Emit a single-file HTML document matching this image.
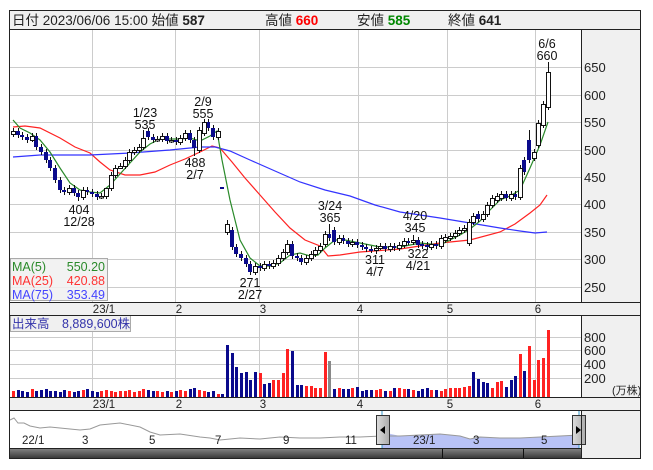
<!DOCTYPE html>
<html><head><meta charset="utf-8">
<style>
html,body{margin:0;padding:0;background:#fff;width:653px;height:470px;overflow:hidden}
svg{display:block;font-family:"Liberation Sans","Noto Sans CJK JP",sans-serif}
.w{fill:#fff;stroke:#111;stroke-width:1}
.d{fill:#0a0a8c}
.r{fill:#f22}
.b{fill:#0a0a8c}
</style></head><body>
<svg width="653" height="470" viewBox="0 0 653 470" xmlns="http://www.w3.org/2000/svg">
<rect x="0" y="0" width="653" height="470" fill="#fff"/>
<rect x="10" y="10" width="631" height="19" fill="#f0f0f0"/>
<text x="12" y="25" font-size="13.5" fill="#222">日付 2023/06/06 15:00 始値 <tspan font-weight="bold">587</tspan></text>
<text x="265" y="25" font-size="13.5" fill="#222">高値 <tspan font-weight="bold" fill="#f00">660</tspan></text>
<text x="357" y="25" font-size="13.5" fill="#222">安値 <tspan font-weight="bold" fill="#080">585</tspan></text>
<text x="448" y="25" font-size="13.5" fill="#222">終値 <tspan font-weight="bold">641</tspan></text>
<rect x="581" y="29" width="60" height="381" fill="#f0f0f0"/>
<rect x="581" y="410" width="60" height="49" fill="#eee"/>
<rect x="10" y="302" width="631" height="13" fill="#f0f0f0"/>
<rect x="10" y="397" width="631" height="13" fill="#f0f0f0"/>
<g stroke="#ccc" stroke-width="1">
<path d="M10 67.5H581M10 95.5H581M10 122.5H581M10 150.5H581M10 177.5H581M10 204.5H581M10 232.5H581M10 259.5H581M10 287.5H581M10 337.5H581M10 350.5H581M10 364.5H581M10 378.5H581"/>
<path d="M92.5 29V302M175.5 29V302M259.5 29V302M358.5 29V302M447.5 29V302M535.5 29V302M92.5 315V397M175.5 315V397M259.5 315V397M358.5 315V397M447.5 315V397M535.5 315V397"/>
</g>
<!-- MA lines -->
<g fill="none" stroke-width="1.2">
<polyline stroke="#f22" points="13,127 25,126 40,128 60,138 75,147 90,153 100,162 110,170 125,175 140,175 155,172 170,165 185,159 200,152 212,146 220,148 232,162 245,178 260,195 275,212 290,228 305,240 320,246 328,256 340,255 360,252 400,249 440,243 470,240 500,232 515,224 530,213 540,205 547,195"/>
<polyline stroke="#33f" points="13,157 40,155 90,155 130,153 170,150 200,147 215,147 230,151 250,160 275,171 300,182 325,190 350,196 375,205 400,212 440,218 470,223 500,228 520,231 535,233 547,232"/>
<polyline stroke="#2a8a2a" points="13,120 20,128 30,133 40,140 50,152 60,168 70,183 80,190 90,192 100,193 110,185 120,174 130,163 140,152 150,144 160,139 170,139 180,139 190,138 200,141 210,136 217,131 222,160 230,200 240,240 250,258 260,266 270,266 280,263 290,255 300,253 310,256 318,255 325,248 335,240 345,240 360,243 380,247 400,247 420,243 440,245 450,240 460,235 470,229 480,221 490,210 500,200 510,196 520,190 530,168 540,145 548,122"/>
</g>
<!-- wicks -->
<path fill="none" stroke="#111" stroke-width="1" d="M13.5 128V137M18.5 128V138M22.5 132V140M27.5 134V143M32.5 133V142M36.5 133V150M41.5 144V155M46.5 149V163M50.5 157V171M55.5 165V183M60.5 177V193M64.5 187V195M69.5 185V195M74.5 185V196M78.5 190V201M83.5 187V200M87.5 187V195M92.5 189V197M97.5 191V200M101.5 193V199M106.5 193V199M111.5 172V191M115.5 165V178M120.5 163V169M125.5 157V169M129.5 149V163M134.5 147V155M139.5 144V153M143.5 130V150M148.5 128V140M153.5 134V143M157.5 136V142M162.5 133V142M167.5 133V144M171.5 137V143M176.5 137V145M180.5 135V145M185.5 130V141M190.5 130V143M194.5 137V156M199.5 127V153M204.5 119V136M208.5 119V131M213.5 125V140M218.5 128V140M222.5 187V189M227.5 220V235M232.5 227V250M236.5 244V257M241.5 251V261M246.5 255V267M250.5 261V275M255.5 263V275M260.5 263V271M264.5 261V271M269.5 261V269M273.5 260V269M278.5 255V266M283.5 249V261M287.5 240V255M292.5 241V259M297.5 253V261M301.5 255V265M306.5 255V265M311.5 251V261M315.5 247V257M320.5 243V253M325.5 231V247M329.5 224V241M334.5 227V245M339.5 235V245M343.5 235V244M348.5 238V247M352.5 239V247M357.5 239V248M362.5 242V250M366.5 244V252M371.5 246V253M376.5 245V254M380.5 243V250M385.5 243V252M390.5 243V252M394.5 243V251M399.5 242V251M404.5 238V248M408.5 238V245M413.5 235V245M418.5 237V248M422.5 241V249M427.5 242V250M431.5 241V250M436.5 241V249M441.5 235V249M445.5 234V243M450.5 233V241M455.5 230V239M459.5 227V236M464.5 225V233M469.5 219V246M473.5 213V225M478.5 211V222M483.5 211V222M487.5 202V217M492.5 195V208M497.5 193V203M501.5 191V201M506.5 191V201M511.5 191V201M515.5 191V200M520.5 165V200M524.5 157V175M529.5 130V163M534.5 149V161M538.5 120V148M543.5 101V128M548.5 62V110"/>
<!-- down bodies -->
<g class="d">
<rect x="16" y="131" width="4" height="4"/><rect x="20" y="135" width="4" height="2"/><rect x="25" y="137" width="4" height="3"/><rect x="34" y="136" width="4" height="11"/><rect x="39" y="147" width="4" height="5"/><rect x="44" y="152" width="4" height="8"/><rect x="48" y="160" width="4" height="8"/><rect x="53" y="168" width="4" height="12"/><rect x="58" y="180" width="4" height="10"/><rect x="62" y="190" width="4" height="2"/><rect x="72" y="188" width="4" height="5"/><rect x="76" y="193" width="4" height="4"/><rect x="85" y="190" width="4" height="2"/><rect x="90" y="192" width="4" height="2"/><rect x="95" y="194" width="4" height="3"/>
<rect x="146" y="131" width="4" height="6"/><rect x="151" y="137" width="4" height="3"/><rect x="165" y="136" width="4" height="5"/><rect x="174" y="140" width="4" height="2"/><rect x="188" y="133" width="4" height="7"/><rect x="192" y="140" width="4" height="8"/><rect x="206" y="122" width="4" height="6"/><rect x="211" y="128" width="4" height="9"/><rect x="220" y="187" width="4" height="2"/>
<rect x="230" y="230" width="4" height="17"/><rect x="234" y="247" width="4" height="7"/><rect x="239" y="254" width="4" height="4"/><rect x="244" y="258" width="4" height="6"/><rect x="248" y="264" width="4" height="8"/><rect x="258" y="266" width="4" height="2"/><rect x="267" y="264" width="4" height="2"/><rect x="290" y="244" width="4" height="12"/><rect x="295" y="256" width="4" height="2"/><rect x="299" y="258" width="4" height="4"/>
<rect x="327" y="234" width="4" height="4"/><rect x="332" y="230" width="4" height="12"/><rect x="341" y="238" width="4" height="3"/><rect x="346" y="241" width="4" height="3"/><rect x="355" y="242" width="4" height="3"/><rect x="360" y="245" width="4" height="2"/><rect x="364" y="247" width="4" height="2"/><rect x="369" y="249" width="4" height="2"/><rect x="383" y="246" width="4" height="3"/><rect x="392" y="246" width="4" height="2"/><rect x="406" y="241" width="4" height="2"/><rect x="416" y="240" width="4" height="5"/><rect x="420" y="244" width="4" height="2"/><rect x="425" y="245" width="4" height="2"/><rect x="434" y="244" width="4" height="2"/>
<rect x="476" y="214" width="4" height="5"/><rect x="504" y="194" width="4" height="4"/><rect x="513" y="194" width="4" height="3"/><rect x="522" y="160" width="4" height="12"/><rect x="527" y="140" width="4" height="20"/>
</g>
<!-- up bodies -->
<g class="w">
<rect x="11.5" y="131.5" width="4" height="3"/><rect x="30.5" y="136.5" width="4" height="4"/><rect x="67.5" y="188.5" width="4" height="4"/><rect x="81.5" y="190.5" width="4" height="7"/><rect x="99.5" y="196.5" width="4" height="1.5"/><rect x="104.5" y="188.5" width="4" height="8"/><rect x="109.5" y="175.5" width="4" height="13"/><rect x="113.5" y="168.5" width="4" height="7"/><rect x="118.5" y="166.5" width="4" height="2"/><rect x="123.5" y="160.5" width="4" height="6"/><rect x="127.5" y="152.5" width="4" height="8"/><rect x="132.5" y="150.5" width="4" height="2"/><rect x="137.5" y="147.5" width="4" height="3"/><rect x="141.5" y="138.5" width="4" height="9"/>
<rect x="155.5" y="139.5" width="4" height="1.5"/><rect x="160.5" y="136.5" width="4" height="3"/><rect x="169.5" y="140.5" width="4" height="1.5"/><rect x="178.5" y="138.5" width="4" height="4"/><rect x="183.5" y="133.5" width="4" height="5"/><rect x="197.5" y="130.5" width="4" height="20"/><rect x="202.5" y="122.5" width="4" height="11"/><rect x="216.5" y="131.5" width="4" height="6"/>
<rect x="225.5" y="224.5" width="4" height="8"/><rect x="253.5" y="266.5" width="4" height="6"/><rect x="262.5" y="264.5" width="4" height="4"/><rect x="271.5" y="263.5" width="4" height="3"/><rect x="276.5" y="258.5" width="4" height="5"/><rect x="281.5" y="252.5" width="4" height="6"/><rect x="285.5" y="244.5" width="4" height="8"/><rect x="304.5" y="258.5" width="4" height="4"/><rect x="309.5" y="254.5" width="4" height="4"/><rect x="313.5" y="250.5" width="4" height="4"/><rect x="318.5" y="246.5" width="4" height="4"/><rect x="323.5" y="234.5" width="4" height="10"/>
<rect x="337.5" y="238.5" width="4" height="4"/><rect x="350.5" y="242.5" width="4" height="2"/><rect x="374.5" y="248.5" width="4" height="2"/><rect x="378.5" y="246.5" width="4" height="2"/><rect x="388.5" y="246.5" width="4" height="3"/><rect x="397.5" y="245.5" width="4" height="3"/><rect x="402.5" y="241.5" width="4" height="4"/><rect x="411.5" y="240.5" width="4" height="2"/><rect x="429.5" y="244.5" width="4" height="3"/><rect x="439.5" y="238.5" width="4" height="8"/><rect x="443.5" y="237.5" width="4" height="3"/><rect x="448.5" y="236.5" width="4" height="2"/><rect x="453.5" y="233.5" width="4" height="3"/><rect x="457.5" y="230.5" width="4" height="3"/><rect x="462.5" y="228.5" width="4" height="2"/><rect x="467.5" y="222.5" width="4" height="21"/><rect x="471.5" y="216.5" width="4" height="6"/>
<rect x="481.5" y="214.5" width="4" height="5"/><rect x="485.5" y="205.5" width="4" height="9"/><rect x="490.5" y="198.5" width="4" height="7"/><rect x="495.5" y="196.5" width="4" height="4"/><rect x="499.5" y="194.5" width="4" height="4"/><rect x="509.5" y="194.5" width="4" height="4"/><rect x="518.5" y="168.5" width="4" height="29"/><rect x="532.5" y="152.5" width="4" height="6"/><rect x="536.5" y="123.5" width="4" height="22"/><rect x="541.5" y="104.5" width="4" height="21"/><rect x="546.5" y="72.5" width="4" height="35"/>
</g>
<!-- volume -->
<g>
<rect class="r" x="12" y="391" width="3" height="6"/><rect class="b" x="17" y="390" width="3" height="7"/><rect class="b" x="21" y="391" width="3" height="6"/><rect class="b" x="26" y="392" width="3" height="5"/><rect class="r" x="31" y="389" width="3" height="8"/><rect class="b" x="35" y="391" width="3" height="6"/><rect class="b" x="40" y="390" width="3" height="7"/><rect class="b" x="45" y="389" width="3" height="8"/><rect class="b" x="49" y="391" width="3" height="6"/><rect class="b" x="54" y="391" width="3" height="6"/><rect class="b" x="59" y="392" width="3" height="5"/><rect class="b" x="63" y="390" width="3" height="7"/><rect class="r" x="68" y="391" width="3" height="6"/><rect class="b" x="73" y="392" width="3" height="5"/><rect class="b" x="77" y="391" width="3" height="6"/><rect class="r" x="82" y="390" width="3" height="7"/><rect class="b" x="86" y="389" width="3" height="8"/><rect class="b" x="91" y="391" width="3" height="6"/><rect class="b" x="96" y="392" width="3" height="5"/><rect class="r" x="100" y="391" width="3" height="6"/><rect class="r" x="105" y="390" width="3" height="7"/><rect class="r" x="110" y="391" width="3" height="6"/><rect class="r" x="114" y="392" width="3" height="5"/><rect class="r" x="119" y="391" width="3" height="6"/><rect class="r" x="124" y="391" width="3" height="6"/><rect class="r" x="128" y="390" width="3" height="7"/><rect class="r" x="133" y="392" width="3" height="5"/><rect class="r" x="138" y="391" width="3" height="6"/><rect class="r" x="142" y="389" width="3" height="8"/><rect class="b" x="147" y="390" width="3" height="7"/><rect class="b" x="152" y="391" width="3" height="6"/><rect class="r" x="156" y="391" width="3" height="6"/><rect class="r" x="161" y="392" width="3" height="5"/><rect class="b" x="166" y="391" width="3" height="6"/><rect class="r" x="170" y="392" width="3" height="5"/><rect class="b" x="175" y="391" width="3" height="6"/><rect class="r" x="179" y="390" width="3" height="7"/><rect class="r" x="184" y="391" width="3" height="6"/><rect class="b" x="189" y="389" width="3" height="8"/><rect class="b" x="193" y="388" width="3" height="9"/><rect class="r" x="198" y="390" width="3" height="7"/><rect class="r" x="203" y="391" width="3" height="6"/><rect class="b" x="207" y="392" width="3" height="5"/><rect class="b" x="212" y="391" width="3" height="6"/><rect class="r" x="217" y="394" width="3" height="3"/><rect class="b" x="221" y="394" width="3" height="3"/>
<rect class="b" x="226" y="345" width="3" height="52"/><rect class="b" x="231" y="353" width="3" height="44"/><rect class="b" x="235" y="367" width="3" height="30"/><rect class="b" x="240" y="373" width="3" height="24"/><rect class="b" x="245" y="372" width="3" height="25"/><rect class="b" x="249" y="380" width="3" height="17"/><rect class="b" x="254" y="372" width="3" height="25"/><rect class="r" x="259" y="373" width="3" height="24"/><rect class="b" x="263" y="384" width="3" height="13"/><rect class="b" x="268" y="383" width="3" height="14"/><rect class="r" x="272" y="380" width="3" height="17"/><rect class="r" x="277" y="380" width="3" height="17"/><rect class="r" x="282" y="373" width="3" height="24"/><rect class="r" x="286" y="349" width="3" height="48"/><rect class="b" x="291" y="351" width="3" height="46"/><rect class="b" x="296" y="385" width="3" height="12"/><rect class="b" x="300" y="385" width="3" height="12"/><rect class="r" x="305" y="386" width="3" height="11"/><rect class="r" x="310" y="386" width="3" height="11"/><rect class="r" x="314" y="388" width="3" height="9"/><rect class="r" x="319" y="388" width="3" height="9"/><rect class="r" x="324" y="352" width="3" height="45"/><rect x="328" y="361" width="3" height="36" fill="#888"/>
<rect class="b" x="333" y="389" width="3" height="8"/><rect class="r" x="338" y="388" width="3" height="9"/><rect class="b" x="342" y="389" width="3" height="8"/><rect class="b" x="347" y="389" width="3" height="8"/><rect class="r" x="351" y="388" width="3" height="9"/><rect class="b" x="356" y="387" width="3" height="10"/><rect class="b" x="361" y="391" width="3" height="6"/><rect class="b" x="365" y="390" width="3" height="7"/><rect class="b" x="370" y="390" width="3" height="7"/><rect class="r" x="375" y="390" width="3" height="7"/><rect class="r" x="379" y="389" width="3" height="8"/><rect class="b" x="384" y="391" width="3" height="6"/><rect class="r" x="389" y="391" width="3" height="6"/><rect class="b" x="393" y="388" width="3" height="9"/><rect class="r" x="398" y="388" width="3" height="9"/><rect class="r" x="403" y="389" width="3" height="8"/><rect class="b" x="407" y="389" width="3" height="8"/><rect class="r" x="412" y="390" width="3" height="7"/><rect class="b" x="417" y="391" width="3" height="6"/><rect class="b" x="421" y="389" width="3" height="8"/><rect class="b" x="426" y="388" width="3" height="9"/><rect class="r" x="430" y="390" width="3" height="7"/><rect class="b" x="435" y="390" width="3" height="7"/><rect class="r" x="440" y="391" width="3" height="6"/><rect class="r" x="444" y="389" width="3" height="8"/><rect class="r" x="449" y="388" width="3" height="9"/><rect class="r" x="454" y="388" width="3" height="9"/><rect class="r" x="458" y="388" width="3" height="9"/><rect class="r" x="463" y="387" width="3" height="10"/><rect class="r" x="468" y="386" width="3" height="11"/><rect class="b" x="472" y="372" width="3" height="25"/><rect class="b" x="477" y="379" width="3" height="18"/><rect class="b" x="482" y="382" width="3" height="15"/><rect class="b" x="486" y="383" width="3" height="14"/><rect class="r" x="491" y="388" width="3" height="9"/><rect class="r" x="496" y="382" width="3" height="15"/><rect class="r" x="500" y="381" width="3" height="16"/><rect class="b" x="505" y="387" width="3" height="10"/><rect class="b" x="510" y="380" width="3" height="17"/><rect class="b" x="514" y="376" width="3" height="21"/><rect class="r" x="519" y="354" width="3" height="43"/><rect class="b" x="523" y="371" width="3" height="26"/><rect class="r" x="528" y="346" width="3" height="51"/><rect class="r" x="533" y="380" width="3" height="17"/><rect class="r" x="537" y="360" width="3" height="37"/><rect class="r" x="542" y="358" width="3" height="39"/><rect class="r" x="547" y="330" width="3" height="67"/>
</g>
<g font-size="13" fill="#222">
<text x="584" y="72">650</text><text x="584" y="100">600</text><text x="584" y="127">550</text><text x="584" y="155">500</text><text x="584" y="182">450</text><text x="584" y="209">400</text><text x="584" y="237">350</text><text x="584" y="264">300</text><text x="584" y="292">250</text>
<text x="584" y="342">800</text><text x="584" y="355">600</text><text x="584" y="369">400</text><text x="584" y="383">200</text>
<text x="612" y="394" font-size="11">(万株)</text>
</g>
<g font-size="11.5" fill="#222" text-anchor="middle">
<text x="104" y="313">23/1</text><text x="179" y="313">2</text><text x="263" y="313">3</text><text x="360" y="313">4</text><text x="450" y="313">5</text><text x="538" y="313">6</text>
<text x="104" y="408">23/1</text><text x="179" y="408">2</text><text x="263" y="408">3</text><text x="360" y="408">4</text><text x="450" y="408">5</text><text x="538" y="408">6</text>
</g>
<g font-size="12.5" fill="#111" text-anchor="middle">
<text x="547" y="48">6/6</text><text x="547" y="60">660</text>
<text x="145" y="117">1/23</text><text x="145" y="129">535</text>
<text x="203" y="106">2/9</text><text x="203" y="118">555</text>
<text x="79" y="214">404</text><text x="79" y="226">12/28</text>
<text x="195" y="167">488</text><text x="195" y="179">2/7</text>
<text x="250" y="287">271</text><text x="250" y="299">2/27</text>
<text x="330" y="210">3/24</text><text x="330" y="222">365</text>
<text x="375" y="264">311</text><text x="375" y="276">4/7</text>
<text x="415" y="220">4/20</text><text x="415" y="232">345</text>
<text x="418" y="258">322</text><text x="418" y="270">4/21</text>
</g>
<rect x="10.5" y="258.5" width="97" height="42" fill="#f0f0f0" fill-opacity="0.85" stroke="#aaa"/>
<g font-size="12.5">
<text x="12" y="271" fill="#2a8a2a">MA(5)</text><text x="105" y="271" fill="#2a8a2a" text-anchor="end">550.20</text>
<text x="12" y="285" fill="#f33">MA(25)</text><text x="105" y="285" fill="#f33" text-anchor="end">420.88</text>
<text x="12" y="299" fill="#44f">MA(75)</text><text x="105" y="299" fill="#44f" text-anchor="end">353.49</text>
</g>
<rect x="10.5" y="315.5" width="120" height="16" fill="#f0f0f0" stroke="#aaa"/>
<text x="12" y="328" font-size="12.5" fill="#33a">出来高　8,889,600株</text>
<polygon points="382,432 400,436 420,435 440,434 460,436 470,439 480,437 500,438 520,438 530,438 540,437 560,436 579,435 579,448 382,448" fill="#b8c2f5"/>
<polyline fill="none" stroke="#999" stroke-width="1" points="10,420 14,418 18,423 24,423 30,426 40,428 50,427 60,428 70,429 80,430 90,429 100,425 120,423 140,427 150,432 160,435 180,434 200,437 210,438 220,440 240,438 260,439 280,437 300,438 320,438 340,437 360,437 382,436 400,436 420,435 440,434 460,436 470,439 480,437 500,438 520,438 540,437 560,436 579,435"/>
<g font-size="11.5" fill="#222">
<text x="22" y="444">22/1</text><text x="82" y="444">3</text><text x="149" y="444">5</text><text x="215" y="444">7</text><text x="283" y="444">9</text><text x="345" y="444">11</text><text x="413" y="444">23/1</text><text x="473" y="444">3</text><text x="541" y="444">5</text>
</g>
<line x1="382" y1="410" x2="382" y2="448" stroke="#39c"/>
<line x1="579" y1="410" x2="579" y2="448" stroke="#39c"/>
<defs><linearGradient id="hg" x1="0" x2="1"><stop offset="0" stop-color="#ddd"/><stop offset="1" stop-color="#aaa"/></linearGradient>
<linearGradient id="sg" x1="0" y1="0" x2="0" y2="1"><stop offset="0" stop-color="#888"/><stop offset="1" stop-color="#333"/></linearGradient></defs>
<rect x="376.5" y="415.5" width="13" height="29" fill="url(#hg)" stroke="#333"/>
<polygon points="385,426 385,434 380,430" fill="#000"/>
<rect x="572.5" y="415.5" width="13" height="29" fill="url(#hg)" stroke="#333"/>
<polygon points="576,426 576,434 581,430" fill="#000"/>
<rect x="10" y="448" width="571" height="11" fill="url(#sg)"/>
<line x1="442.5" y1="448" x2="442.5" y2="459" stroke="#111"/>
<line x1="523.5" y1="448" x2="523.5" y2="459" stroke="#111"/>
<g stroke="#222" fill="none">
<rect x="9.5" y="10.5" width="631" height="448"/>
<line x1="10" y1="29.5" x2="641" y2="29.5"/>
<line x1="581.5" y1="29" x2="581.5" y2="302"/>
<line x1="581.5" y1="315" x2="581.5" y2="397"/>
<line x1="10" y1="302.5" x2="641" y2="302.5"/>
<line x1="10" y1="315.5" x2="641" y2="315.5"/>
<line x1="10" y1="397.5" x2="641" y2="397.5"/>
<line x1="10" y1="410.5" x2="641" y2="410.5"/>
<line x1="10" y1="448.5" x2="581" y2="448.5"/>
<line x1="581.5" y1="410" x2="581.5" y2="459"/>
</g>
</svg>
</body></html>
